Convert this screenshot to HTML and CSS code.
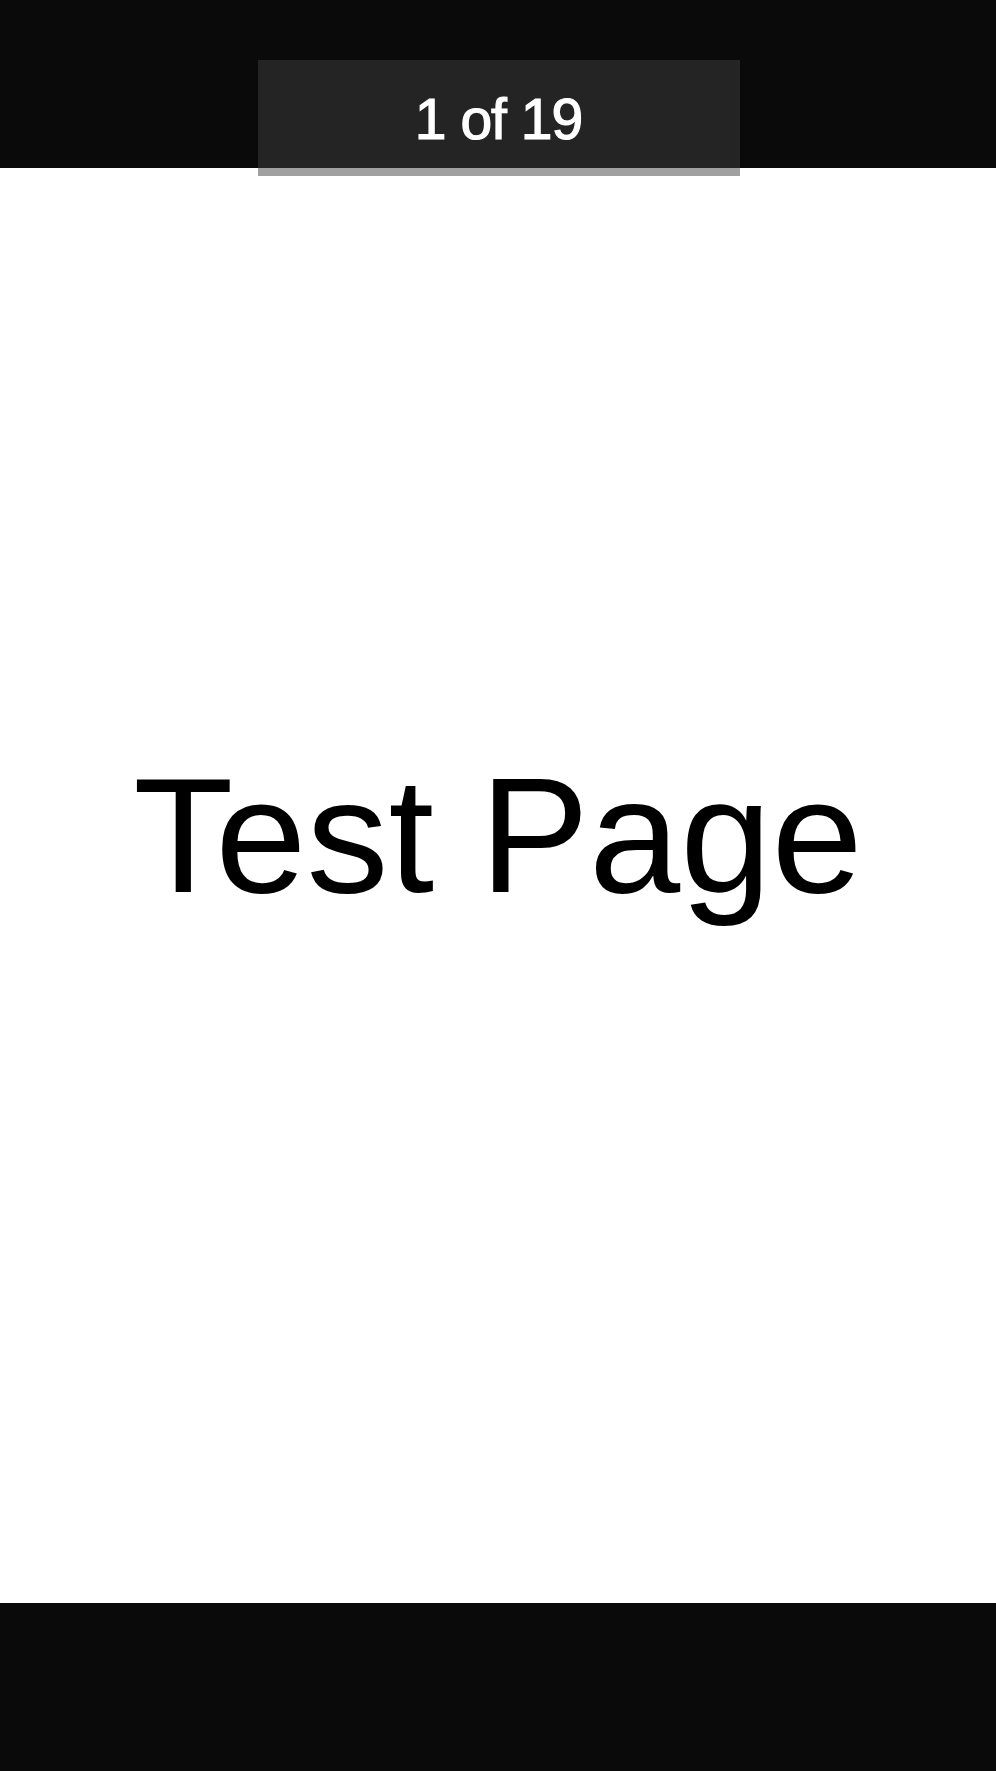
FILE: index.html
```html
<!DOCTYPE html>
<html>
<head>
<meta charset="utf-8">
<link rel="stylesheet" href="styles.css">
</head>
<body>
<div class="viewer">
  <header class="topbar">
    <div class="counter">1 of 19</div>
  </header>
  <main class="page">
    <h1 class="title">Test Page</h1>
  </main>
  <footer class="bottombar"></footer>
</div>
</body>
</html>
```

FILE: styles.css
```css
html, body {
  margin: 0;
  padding: 0;
  background: #ffffff;
}
.viewer {
  display: flex;
  flex-direction: column;
  height: 1771px;
  font-family: "Liberation Sans", Arial, sans-serif;
}
.topbar {
  height: 168px;
  box-sizing: border-box;
  padding-top: 60px;
  background: #0a0a0a;
  display: flex;
  justify-content: center;
  flex-shrink: 0;
}
.counter {
  width: 482px;
  height: 103px;
  padding-top: 5px;
  flex-shrink: 0;
  background: #242424;
  border-bottom: 8px solid #a0a0a0;
  color: #ffffff;
  font-size: 57px;
  line-height: 108px;
  text-align: center;
  letter-spacing: -1px;
  -webkit-text-stroke: 1.2px #ffffff;
  margin-left: 1px;
}
.page {
  flex: 1;
  display: flex;
  justify-content: center;
  align-items: flex-start;
  padding-top: 586px;
  box-sizing: border-box;
}
.title {
  margin: 0;
  font-weight: normal;
  font-size: 164px;
  line-height: 164px;
  color: #000000;
}
.bottombar {
  height: 168px;
  background: #0a0a0a;
  flex-shrink: 0;
}
```
